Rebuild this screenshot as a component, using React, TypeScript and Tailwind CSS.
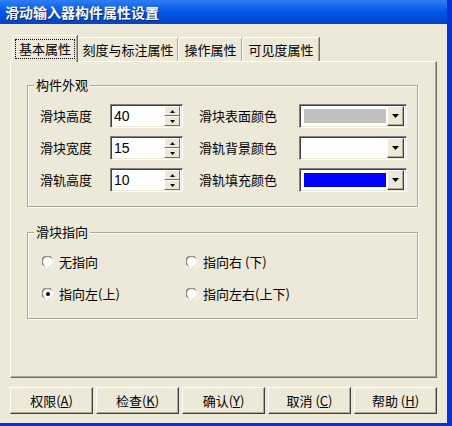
import React from "react";

const FONT = { fontFamily: '"Noto Sans CJK SC", "Noto Sans", sans-serif' };

function Tab({ label, width, selected }: { label: string; width: number; selected?: boolean }) {
  if (selected) {
    return (
      <div
        className="relative z-10 -mb-px flex h-[27px] items-start justify-center rounded-tl-[2px] border-l border-t border-white bg-[#ECE9D8] pt-[3px] shadow-[inset_-1px_0_0_#ACA899,1px_0_0_#716F64]"
        style={{ width }}
      >
        <span className="border border-dotted border-black px-[3px] leading-[18px]">{label}</span>
      </div>
    );
  }
  return (
    <div
      className="flex h-[24px] items-start justify-center rounded-tl-[2px] border-l border-t border-white bg-[#ECE9D8] pt-[3px] shadow-[inset_-1px_0_0_#ACA899,1px_0_0_#716F64] leading-[18px]"
      style={{ width }}
    >
      {label}
    </div>
  );
}

function GroupBox({ title, className, children }: { title: string; className: string; children: React.ReactNode }) {
  return (
    <div className={`relative border border-[#ACA899] shadow-[inset_1px_1px_0_#fff,1px_1px_0_#fff] ${className}`}>
      <span className="absolute left-[6px] top-[-10px] bg-[#ECE9D8] px-[2px] leading-[18px]">{title}</span>
      {children}
    </div>
  );
}

function Spinner({ value }: { value: string }) {
  return (
    <div className="flex h-[24px] w-[73px] items-center justify-between border border-b-white border-l-[#808080] border-r-white border-t-[#808080] bg-white shadow-[inset_1px_1px_0_#404040,inset_-1px_-1px_0_#ECE9D8] pl-[3px] pr-[2px]">
      <span className="text-[14px] leading-none" style={{ fontFamily: '"Liberation Sans", Arial, sans-serif' }}>{value}</span>
      <div className="flex flex-col">
        {[0, 1].map((i) => (
          <div
            key={i}
            className="flex h-[10px] w-[16px] items-center justify-center border border-b-[#716F64] border-l-white border-r-[#716F64] border-t-white bg-[#ECE9D8]"
          >
            <svg width="5" height="3" viewBox="0 0 5 3">
              {i === 0 ? <path d="M2.5 0 L5 3 L0 3 Z" fill="#000" /> : <path d="M0 0 L5 0 L2.5 3 Z" fill="#000" />}
            </svg>
          </div>
        ))}
      </div>
    </div>
  );
}

function ColorCombo({ color }: { color: string }) {
  return (
    <div className="flex h-[24px] w-[108px] items-center border border-b-white border-l-[#808080] border-r-white border-t-[#808080] bg-white shadow-[inset_1px_1px_0_#404040,inset_-1px_-1px_0_#ECE9D8] pl-[4px] pr-[2px]">
      <div className="h-[14px] w-[82px]" style={{ backgroundColor: color }} />
      <div className="ml-auto flex h-[20px] w-[17px] items-center justify-center border border-b-[#404040] border-l-white border-r-[#404040] border-t-white bg-[#ECE9D8] shadow-[inset_-1px_-1px_0_#ACA899]">
        <svg width="7" height="4" viewBox="0 0 7 4">
          <path d="M0 0 L7 0 L3.5 4 Z" fill="#000" />
        </svg>
      </div>
    </div>
  );
}

function Radio({ label, checked }: { label: string; checked?: boolean }) {
  return (
    <div className="flex items-center gap-[5px]">
      <svg width="12" height="12" viewBox="0 0 12 12">
        <circle cx="6" cy="6" r="5.5" fill="#fff" stroke="#ACA899" />
        <path d="M1.5 9 A5 5 0 0 1 9 1.5" fill="none" stroke="#808080" strokeWidth="1.2" />
        <path d="M10.5 3 A5 5 0 0 1 3 10.5" fill="none" stroke="#fff" strokeWidth="1.2" />
        {checked && <circle cx="6" cy="6" r="2" fill="#000" />}
      </svg>
      <span className="leading-[18px]">{label}</span>
    </div>
  );
}

function DlgButton({ text, hot, tail }: { text: string; hot: string; tail: string }) {
  return (
    <div className="flex h-[27px] w-[83px] items-center justify-center border border-b-[#404040] border-l-white border-r-[#404040] border-t-white bg-[#ECE9D8] shadow-[inset_-1px_-1px_0_#ACA899]">
      <span>
        {text}
        <span className="underline">{hot}</span>
        {tail}
      </span>
    </div>
  );
}

export default function App() {
  const rows = [
    { a: "滑块高度", v: "40", b: "滑块表面颜色", c: "#C0C0C0" },
    { a: "滑块宽度", v: "15", b: "滑轨背景颜色", c: "#FFFFFF" },
    { a: "滑轨高度", v: "10", b: "滑轨填充颜色", c: "#0000FF" },
  ];

  return (
    <div
      className="flex h-[426px] w-[452px] flex-col border-b-[3px] border-r-[5px] border-[#0831D9] bg-[#ECE9D8] text-[13px] text-black"
      style={FONT}
    >
      <div className="flex h-[24px] shrink-0 items-center bg-gradient-to-b from-[#2E7EF2] via-[#0055EA] to-[#0443C6] pl-[5px]">
        <span className="text-[14px] font-bold leading-none text-white [text-shadow:1px_1px_0_#0A246A]">
          滑动输入器构件属性设置
        </span>
      </div>

      <div className="flex flex-col px-[10px] pt-[11px]">
        <div className="flex h-[26px] items-end pl-[2px]">
          <Tab label="基本属性" width={65} selected />
          <Tab label="刻度与标注属性" width={101} />
          <Tab label="操作属性" width={64} />
          <Tab label="可见度属性" width={77} />
        </div>

        <div className="flex h-[317px] w-[427px] flex-col border border-b-[#716F64] border-l-white border-r-[#716F64] border-t-white shadow-[inset_-1px_-1px_0_#ACA899] pl-[16px] pt-[23px]">
          <GroupBox title="构件外观" className="h-[122px] w-[391px] pl-[12px] pt-[18px]">
            <div className="flex flex-col gap-[8px]">
              {rows.map((r) => (
                <div key={r.a} className="flex h-[24px] items-center">
                  <span className="w-[70px]">{r.a}</span>
                  <Spinner value={r.v} />
                  <span className="ml-[16px] w-[100px]">{r.b}</span>
                  <ColorCombo color={r.c} />
                </div>
              ))}
            </div>
          </GroupBox>

          <GroupBox title="滑块指向" className="mt-[25px] h-[87px] w-[391px] pl-[14px] pt-[20px]">
            <div className="grid grid-cols-[144px_1fr] gap-y-[14px]">
              <Radio label="无指向" />
              <Radio label="指向右 (下)" />
              <Radio label="指向左(上)" checked />
              <Radio label="指向左右(上下)" />
            </div>
          </GroupBox>
        </div>

        <div className="mt-[9px] flex gap-[3px]">
          <DlgButton text="权限(" hot="A" tail=")" />
          <DlgButton text="检查(" hot="K" tail=")" />
          <DlgButton text="确认(" hot="Y" tail=")" />
          <DlgButton text="取消 (" hot="C" tail=")" />
          <DlgButton text="帮助 (" hot="H" tail=")" />
        </div>
      </div>
    </div>
  );
}
